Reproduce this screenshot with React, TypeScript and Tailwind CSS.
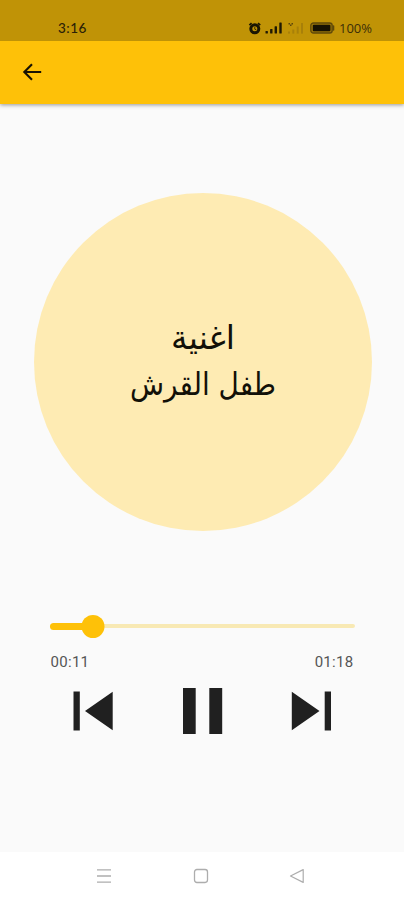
import {useState} from "react";

const TRACK_WIDTH = 305;

function formatTime(seconds: number) {
    const m = String(Math.floor(seconds / 60)).padStart(2, "0");
    const s = String(seconds % 60).padStart(2, "0");
    return `${m}:${s}`;
}

function StatusBar() {
    return (
        <div className="relative z-10 flex h-[41px] items-end justify-between bg-[#c09306] pr-8 pb-[5px] pl-[58px] text-[13px] leading-4 text-[#3b2e08]">
            <span className="font-['Lato',sans-serif] text-[13.5px] font-medium tracking-[0.5px] text-[#2a2106]">3:16</span>
            <div className="flex items-center font-['Open_Sans',sans-serif]">
                <svg width="13" height="13" viewBox="0 0 13 13" fill="none" className="mr-[4px]">
                    <circle cx="6.8" cy="6.8" r="4" stroke="#1a1503" strokeWidth="3"/>
                    <path d="M1.4 3.2 3.6 1.2M12.2 3.2 10 1.2" stroke="#1a1503" strokeWidth="1.8"/>
                    <path d="M6.8 4.8v2.4l1.4.6" stroke="#1a1503" strokeWidth=".8"/>
                </svg>
                <svg width="17" height="12" viewBox="0 0 17 12" fill="#1f1904" className="mr-[5px]">
                    <rect x="0.5" y="9" width="2.4" height="2.6" rx=".5"/>
                    <rect x="5.1" y="7" width="2.4" height="4.6" rx=".5"/>
                    <rect x="9.6" y="4.2" width="2.4" height="7.4" rx=".5"/>
                    <rect x="14.3" y=".6" width="2.4" height="11" rx=".5"/>
                </svg>
                <svg width="17" height="12" viewBox="0 0 17 12" fill="#a88009" className="mr-[6px]">
                    <path d="M1.5 1H3v1.5H1.5zM4.5 1H6v1.5H4.5zM3 2.6h1.5v1.5H3z" fill="#5c470a"/>
                    <rect x="1" y="9.5" width="2" height="2.1"/>
                    <rect x="5.3" y="7.5" width="2" height="4.1"/>
                    <rect x="9.7" y="4.5" width="2" height="7.1"/>
                    <rect x="14" y="1" width="2" height="10.6"/>
                </svg>
                <svg width="25" height="12" viewBox="0 0 25 12" className="mr-1">
                    <rect x=".8" y="1" width="21.4" height="10" rx="2.6" fill="#9a7608" stroke="#5f490a" strokeWidth="1.3"/>
                    <rect x="2.8" y="2.8" width="17.6" height="6.4" rx="1" fill="#171202"/>
                    <path d="M23.5 4v4" stroke="#5f490a" strokeWidth="1.6" strokeLinecap="round"/>
                </svg>
                <span>100%</span>
            </div>
        </div>
    );
}

function AppBar() {
    return (
        <header className="flex h-[63px] items-center bg-[#fec108] pb-0.5 pl-5 shadow-[0_1px_4px_rgba(0,0,0,0.4)]">
            <button type="button" aria-label="Back">
                <svg width="24" height="24" viewBox="0 0 24 24" fill="none" stroke="#171203" strokeWidth="2.1">
                    <path d="M21.2 12H4.5M12 4.2 4.3 12l7.7 7.8"/>
                </svg>
            </button>
        </header>
    );
}

function ProgressSlider({position}: {position: number}) {
    return (
        <div className="relative flex h-6 w-[305px] items-center">
            <div className="h-1 w-full rounded-full bg-[#f8e9b4]"/>
            <div className="absolute left-0 h-[7px] rounded-full bg-[#fec108]" style={{width: position}}/>
            <div className="absolute size-[23px] -translate-x-1/2 rounded-full bg-[#fec108]" style={{left: position}}/>
        </div>
    );
}

function NavigationBar() {
    return (
        <nav className="flex h-12 items-center justify-between bg-white pr-[99px] pl-[96px]">
            <svg width="16" height="16" viewBox="0 0 16 16" stroke="#adadad" strokeWidth="1.3">
                <path d="M1 1.8h14M1 8h14M1 14.2h14"/>
            </svg>
            <svg width="16" height="16" viewBox="0 0 16 16" fill="none" stroke="#adadad" strokeWidth="1.3">
                <rect x="1.5" y="1.5" width="13" height="13" rx="2.4"/>
            </svg>
            <svg width="16" height="16" viewBox="0 0 16 16" fill="none" stroke="#adadad" strokeWidth="1.2" strokeLinejoin="round">
                <path d="M14.2 1.6v12.8L1.5 8z"/>
            </svg>
        </nav>
    );
}

export default function App() {
    const [playing, setPlaying] = useState(true);
    const elapsed = 11;
    const duration = 78;

    return (
        <div className="flex h-[900px] w-full flex-col overflow-hidden bg-[#fafafa]">
            <StatusBar/>
            <AppBar/>

            <main className="flex flex-1 flex-col items-center pt-[89px]">
                <div
                    dir="rtl"
                    className="ml-0.5 flex size-[338px] flex-col items-center justify-center rounded-full bg-[#feebb3] pb-0.5 text-center text-[#121008]"
                >
                    <p className="font-['DejaVu_Sans',sans-serif] text-[33px] leading-[46px]">اغنية</p>
                    <p className="font-['DejaVu_Sans_Condensed','DejaVu_Sans',sans-serif] text-[31px] leading-[46px]">طفل القرش</p>
                </div>

                <div className="mt-[83px]">
                    <ProgressSlider position={(elapsed / duration) * TRACK_WIDTH}/>
                    <div className="mt-3.5 flex justify-between px-px font-['Roboto',sans-serif] text-[15px] leading-5 tracking-[0.3px] text-[#555555]">
                        <span>{formatTime(elapsed)}</span>
                        <span>{formatTime(duration)}</span>
                    </div>
                </div>

                <div className="mt-3.5 flex h-[49px] w-[258px] items-center justify-between text-[#202020]">
                    <button type="button" aria-label="Previous">
                        <svg width="40" height="40" viewBox="0 0 40 40" fill="currentColor">
                            <path d="M.5.5h6.3v39H.5zM39.7.8v38.4L12 20z"/>
                        </svg>
                    </button>
                    <button type="button" aria-label={playing ? "Pause" : "Play"} onClick={() => setPlaying(!playing)}>
                        <svg width="42" height="46" viewBox="0 0 42 46" fill="currentColor">
                            <path d={playing ? "M2 0h12.7v46H2zM28.3 0h12.9v46H28.3z" : "M3 0v46l36-23z"}/>
                        </svg>
                    </button>
                    <button type="button" aria-label="Next">
                        <svg width="40" height="40" viewBox="0 0 40 40" fill="currentColor">
                            <path d="M33.7.5h6.3v39h-6.3zM.8.8v38.4L28.5 20z"/>
                        </svg>
                    </button>
                </div>
            </main>

            <NavigationBar/>
        </div>
    );
}
